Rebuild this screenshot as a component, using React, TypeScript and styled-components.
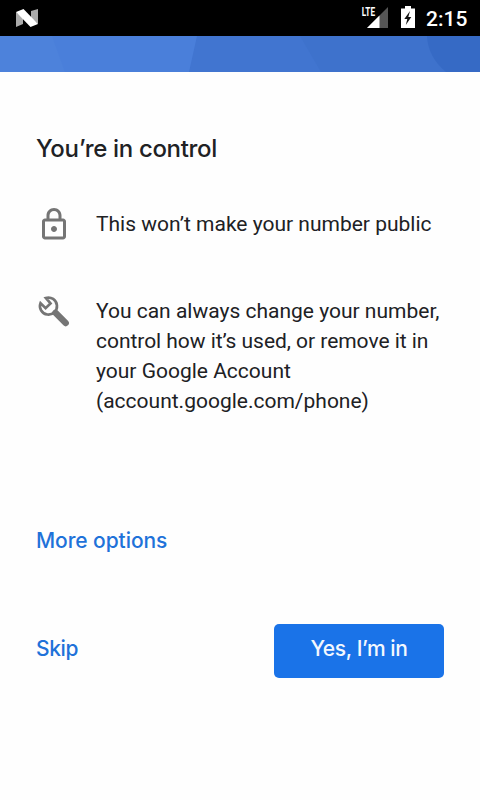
import React from "react";
import styled, { createGlobalStyle } from "styled-components";

const GlobalStyle = createGlobalStyle`
  body { margin: 0; background: #fefefe; }
  * { box-sizing: border-box; }
`;

const Screen = styled.div`
  width: 480px;
  height: 800px;
  display: flex;
  flex-direction: column;
  overflow: hidden;
  background: #fefefe;
  color: #202124;
  font-family: Roboto, sans-serif;
`;

const StatusBar = styled.header`
  height: 36px;
  flex: none;
  display: flex;
  align-items: center;
  justify-content: space-between;
  padding: 0 12px 0 16px;
  background: #000;
`;

const StatusGroup = styled.div`
  display: flex;
  align-items: center;
`;

const Clock = styled.time`
  width: 42px;
  margin-left: 11px;
  color: #fff;
  font-size: 21px;
  font-weight: 500;
  line-height: 36px;
  padding-top: 1px;
  height: 36px;
  white-space: nowrap;
`;

const Banner = styled.svg`
  display: block;
  flex: none;
`;

const Content = styled.main`
  display: flex;
  flex-direction: column;
  padding: 61px 36px 0;
`;

const Title = styled.h1`
  margin: 0;
  height: 32px;
  font: 500 24px/32px "Google Sans", Inter, sans-serif;
  letter-spacing: -0.33px;
  white-space: nowrap;
`;

const Items = styled.ul`
  list-style: none;
  margin: 41px 0 0;
  padding: 0;
  display: flex;
  flex-direction: column;
  gap: 51px;
`;

const Item = styled.li`
  display: flex;
  gap: 24px;
  align-items: flex-start;
`;

const ItemIcon = styled.svg`
  display: block;
  width: 36px;
  height: 36px;
  flex: none;
`;

const ItemText = styled.p`
  margin: 3px 0 0;
  font-size: 21px;
  line-height: 30px;
`;

const Line = styled.span<{ $spacing?: number }>`
  display: block;
  white-space: nowrap;
  letter-spacing: ${(p) => p.$spacing ?? 0}px;
`;

const TextButton = styled.button<{ $spacing?: number }>`
  align-self: flex-start;
  border: 0;
  padding: 0;
  background: none;
  color: #1f72d9;
  font: 500 21px/30px "Google Sans", Inter, sans-serif;
  letter-spacing: ${(p) => p.$spacing ?? 0}px;
  white-space: nowrap;
`;

const MoreRow = styled.div`
  display: flex;
  margin-top: 110px;
`;

const Actions = styled.footer`
  display: flex;
  justify-content: space-between;
  align-items: flex-start;
  margin-top: 68px;
`;

const SkipSlot = styled.div`
  display: flex;
  padding-top: 10px;
`;

const PrimaryButton = styled.button`
  width: 170px;
  height: 54px;
  border: 0;
  border-radius: 5px;
  padding: 0 0 4px;
  background: #1a73e8;
  color: #f3f8fe;
  font: 500 21px/30px "Google Sans", Inter, sans-serif;
  letter-spacing: -0.4px;
  white-space: nowrap;
`;

export default function App() {
  return (
    <Screen>
      <GlobalStyle />
      <StatusBar>
        <svg width="22" height="18" viewBox="0 0 22 18" aria-hidden="true">
          <path d="M0 3L7 9v6L0 18z" fill="#aaa" />
          <path d="M15 2L22 0v15l-7-6z" fill="#aaa" />
          <path d="M0 3L7.500 0 22 15 14.500 18z" fill="#fff" />
        </svg>
        <StatusGroup>
          <svg width="54" height="36" viewBox="361 0 54 36" aria-label="LTE signal, battery charging">
            <path d="M388 7v21h-21z" fill="#555" />
            <path d="M379.500 15.500V28H367z" fill="#fff" />
            <path d="M361 6h15v11h-15z" fill="#000" />
            <text transform="translate(361.800 16.300) scale(.62 1)" fill="#fff" fontFamily="Roboto, sans-serif" fontSize="13.200" fontWeight="700">LTE</text>
            <path d="M405 6h6v2.500h4V28h-14V8.500h4z" fill="#fff" />
            <path d="M410 11l-5.700 8h3l-1.500 6 5.500-8h-3z" fill="#111" />
          </svg>
          <Clock>2:15</Clock>
        </StatusGroup>
      </StatusBar>
      <Banner width="480" height="36" viewBox="0 0 480 36" aria-hidden="true">
        <path d="M0 0h480v36H0z" fill="#4d82db" />
        <path d="M52 0h148v36H65z" fill="#4a7fda" />
        <path d="M197 0h283v36H189z" fill="#4175d0" />
        <path d="M300 0h180v36H321z" fill="#3e72cc" />
        <path d="M427 0h53v36h-34q-18-15-19-36z" fill="#366ac5" />
      </Banner>
      <Content>
        <Title>You’re in control</Title>
        <Items>
          <Item>
            <ItemIcon viewBox="0 -0.400 24 24" fill="#757575" aria-hidden="true">
              <path d="M18 8h-1V6c0-2.760-2.240-5-5-5S7 3.240 7 6v2H6c-1.100 0-2 .9-2 2v10c0 1.100.9 2 2 2h12c1.100 0 2-.9 2-2V10c0-1.100-.9-2-2-2zM9 6c0-1.660 1.340-3 3-3s3 1.340 3 3v2H9V6zm9 14H6V10h12v10zm-6-3c1.100 0 2-.9 2-2s-.9-2-2-2-2 .9-2 2 .9 2 2 2z" />
            </ItemIcon>
            <ItemText><Line>This won’t make your number public</Line></ItemText>
          </Item>
          <Item>
            <ItemIcon viewBox="0 0 36 36" aria-hidden="true">
              <g fill="none" stroke="#757575">
                <path d="M9.800 5a8.500 8.500 0 1 1-5.300 5.100l5.100 5 4.900-4.700z" strokeWidth="2.700" />
                <path d="M19.500 19.800l10.200 10.200" strokeWidth="6.400" strokeLinecap="round" />
              </g>
            </ItemIcon>
            <ItemText>
              <Line>You can always change your number,</Line>
              <Line $spacing={-0.04}>control how it’s used, or remove it in</Line>
              <Line>your Google Account</Line>
              <Line>(account.google.com/phone)</Line>
            </ItemText>
          </Item>
        </Items>
        <MoreRow><TextButton $spacing={-0.08}>More options</TextButton></MoreRow>
        <Actions>
          <SkipSlot><TextButton $spacing={-0.4}>Skip</TextButton></SkipSlot>
          <PrimaryButton>Yes, I’m in</PrimaryButton>
        </Actions>
      </Content>
    </Screen>
  );
}
